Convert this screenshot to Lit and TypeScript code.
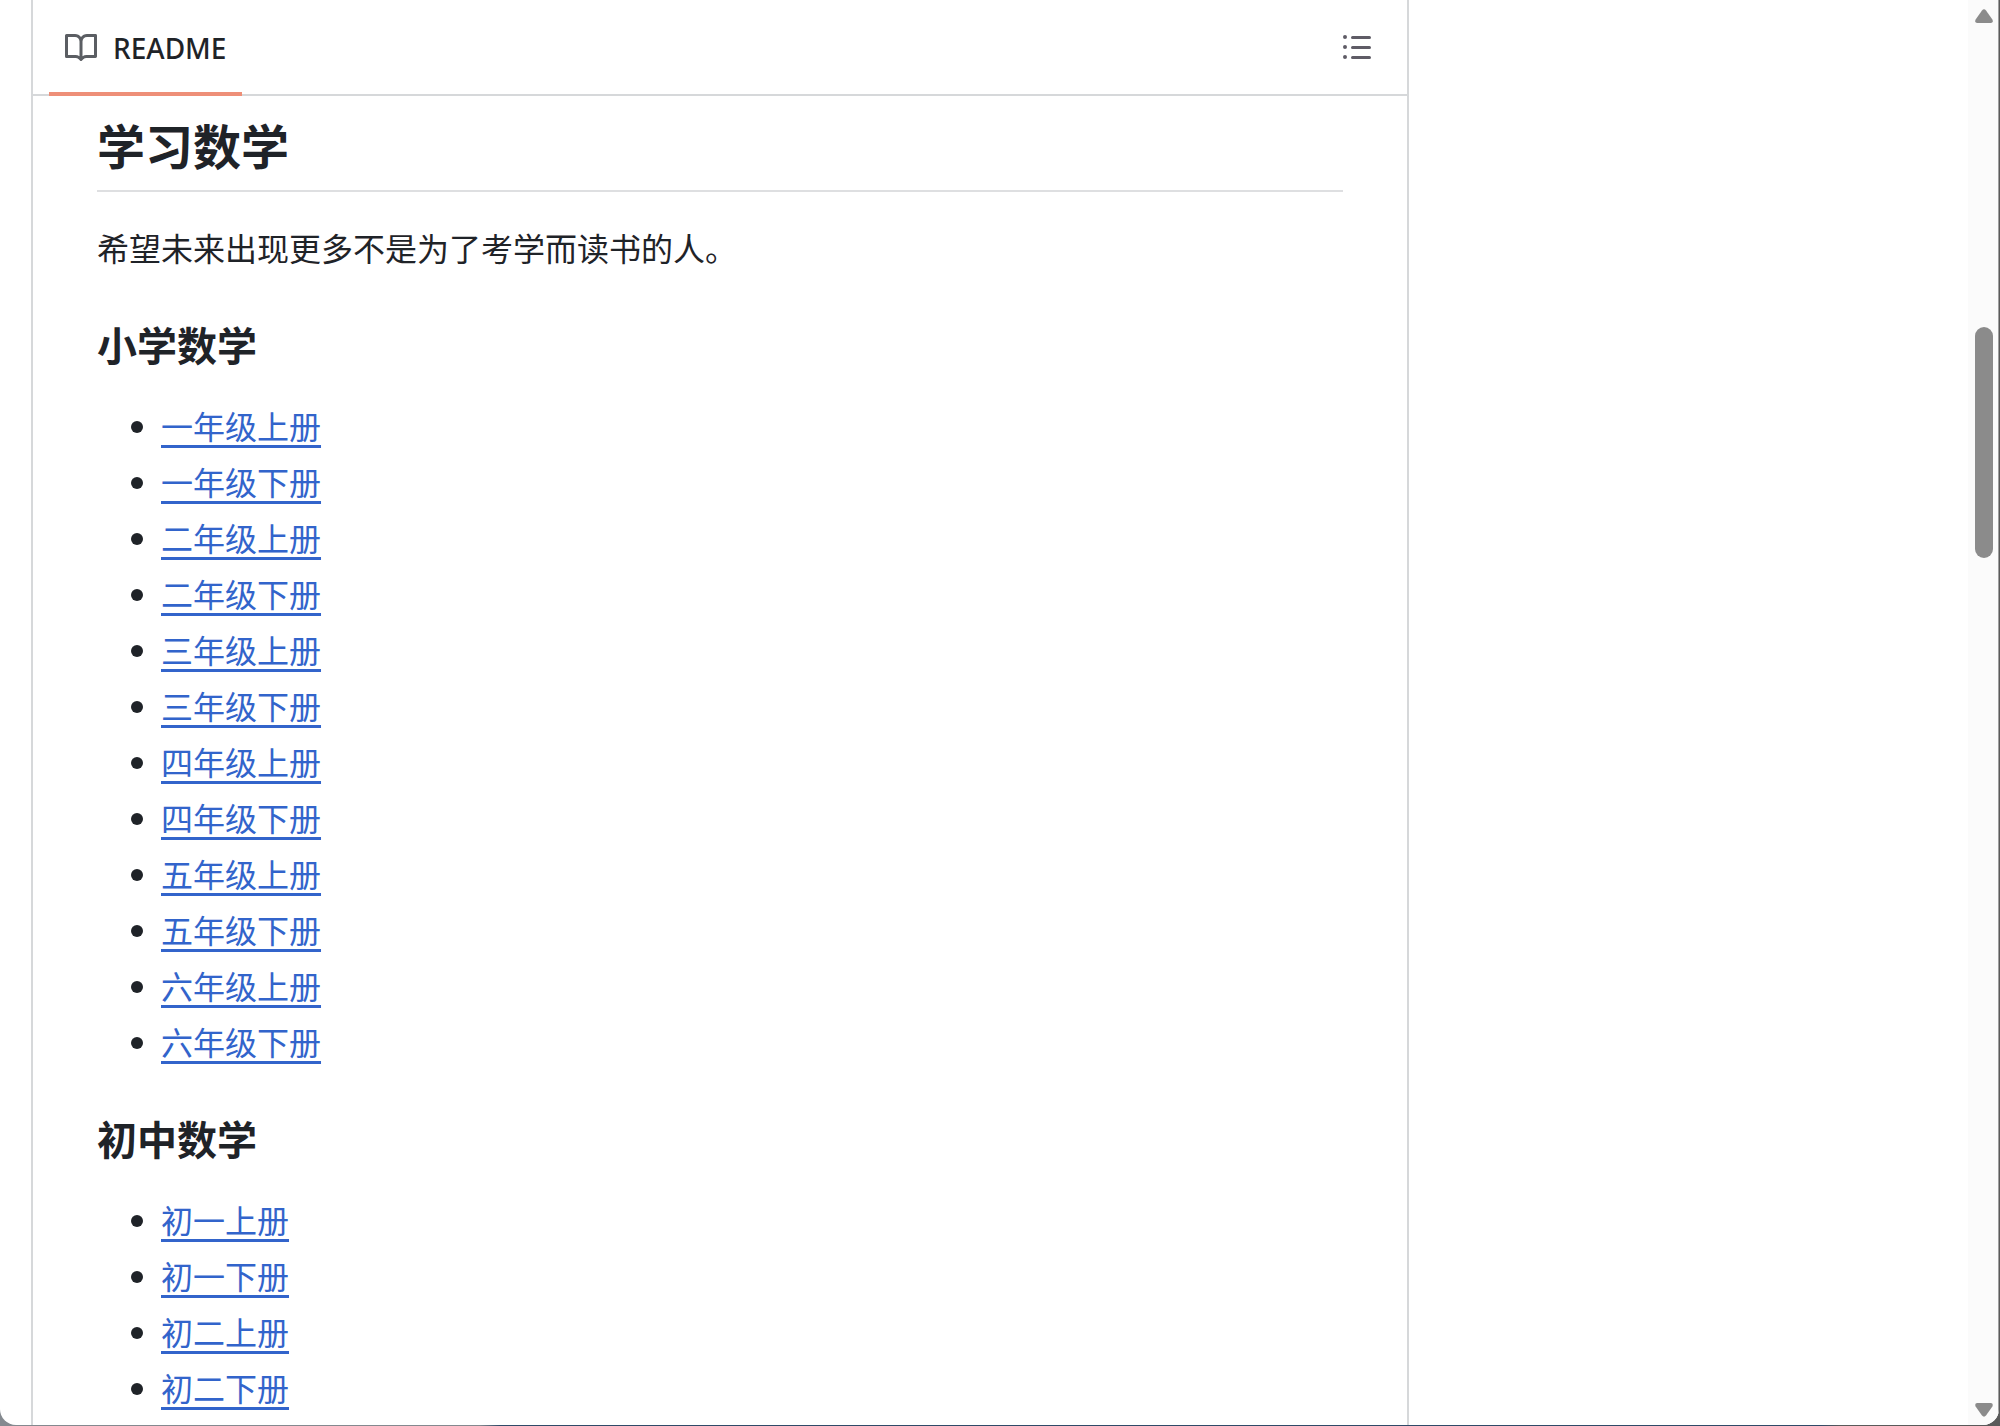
import { LitElement, html, css } from "lit";
import { customElement } from "lit/decorators.js";

interface Section {
  title: string;
  books: string[];
}

const SECTIONS: Section[] = [
  {
    title: "小学数学",
    books: ["一", "二", "三", "四", "五", "六"].flatMap((n) => [`${n}年级上册`, `${n}年级下册`]),
  },
  {
    title: "初中数学",
    books: ["初一上册", "初一下册", "初二上册", "初二下册"],
  },
];

@customElement("readme-header")
class ReadmeHeader extends LitElement {
  static styles = css`
    :host {
      display: flex;
      justify-content: space-between;
      align-items: stretch;
      height: 94px;
      padding: 0 34px 0 16px;
      border-bottom: 2px solid #d6d8da;
    }
    .tab {
      display: flex;
      align-items: center;
      gap: 16px;
      padding: 0 16px;
      margin-bottom: -2px;
      box-shadow: inset 0 -4px #ee8f78;
      color: #1f2328;
      font-size: 28px;
      font-weight: 500;
      line-height: 40px;
      text-decoration: none;
    }
    .outline {
      display: flex;
      align-items: center;
      padding: 0;
      border: 0;
      background: none;
      cursor: pointer;
    }
    .icon {
      display: block;
      width: 32px;
      height: 32px;
      fill: #5b5e63;
    }
    .outline .icon {
      fill: #5f5c66;
    }
  `;

  render() {
    return html`
      <a class="tab" href="#readme" aria-current="page">
        <svg class="icon" viewBox="0 0 16 16" aria-hidden="true">
          <path
            d="M0 1.75A.75.75 0 0 1 .75 1h4.253c1.227 0 2.317.59 3 1.501A3.743 3.743 0 0 1 11.006 1h4.245a.75.75 0 0 1 .75.75v10.5a.75.75 0 0 1-.75.75h-4.507a2.25 2.25 0 0 0-1.591.659l-.622.621a.75.75 0 0 1-1.06 0l-.622-.621A2.25 2.25 0 0 0 5.258 13H.75a.75.75 0 0 1-.75-.75Zm7.251 10.324.004-5.073-.002-2.253A2.25 2.25 0 0 0 5.003 2.5H1.5v9h3.757a3.75 3.75 0 0 1 1.994.574ZM8.755 4.75l-.004 7.322a3.752 3.752 0 0 1 1.992-.572H14.5v-9h-3.495a2.25 2.25 0 0 0-2.25 2.25Z"
          />
        </svg>
        <span>README</span>
      </a>
      <button class="outline" aria-label="Outline">
        <svg class="icon" viewBox="0 0 16 16" aria-hidden="true">
          <path
            d="M5.75 2.5h8.5a.75.75 0 0 1 0 1.5h-8.5a.75.75 0 0 1 0-1.5Zm0 5h8.5a.75.75 0 0 1 0 1.5h-8.5a.75.75 0 0 1 0-1.5Zm0 5h8.5a.75.75 0 0 1 0 1.5h-8.5a.75.75 0 0 1 0-1.5ZM2 14a1 1 0 1 1 0-2 1 1 0 0 1 0 2Zm1-6a1 1 0 1 1-2 0 1 1 0 0 1 2 0ZM2 4a1 1 0 1 1 0-2 1 1 0 0 1 0 2Z"
          />
        </svg>
      </button>
    `;
  }
}

@customElement("readme-article")
class ReadmeArticle extends LitElement {
  static styles = css`
    :host {
      display: block;
      padding: 21px 64px 0;
      color: #1f2328;
      font-size: 32px;
      line-height: 48px;
    }
    .title {
      margin: 0 0 33px;
      padding-bottom: 13px;
      border-bottom: 2px solid #dedfe1;
      font-size: 48px;
      line-height: 60px;
    }
    .intro {
      margin: 0;
    }
    .heading {
      margin: 48px 0 32px;
      font-size: 40px;
      line-height: 50px;
    }
    .books {
      display: grid;
      gap: 8px;
      margin: 0;
      padding: 0 0 0 34px;
      list-style: none;
    }
    .book {
      display: flex;
      align-items: center;
      gap: 18px;
    }
    .book::before {
      content: "";
      width: 12px;
      height: 12px;
      border-radius: 50%;
      background: #1f2328;
    }
    .link {
      color: #3264cb;
      text-decoration: underline;
      text-decoration-thickness: 3px;
      text-underline-offset: 6px;
      text-decoration-skip-ink: none;
    }
  `;

  render() {
    return html`
      <h1 class="title">学习数学</h1>
      <p class="intro">希望未来出现更多不是为了考学而读书的人。</p>
      ${SECTIONS.map(
        (s) => html`
          <h2 class="heading">${s.title}</h2>
          <ul class="books">
            ${s.books.map((b) => html`<li class="book"><a class="link" href="#${b}">${b}</a></li>`)}
          </ul>
        `,
      )}
    `;
  }
}

@customElement("scroll-rail")
class ScrollRail extends LitElement {
  static styles = css`
    :host {
      display: flex;
      flex-direction: column;
      align-items: center;
      padding: 9px 0 8px 2px;
      border-right: 1px solid #a0a0a0;
      background: #fbfbfb;
    }
    .arrow {
      display: block;
      width: 18px;
      height: 14px;
      fill: #8b8b8b;
    }
    .track {
      flex: 1;
      display: grid;
      grid-template-rows: 304fr 231fr 845fr;
    }
    .thumb {
      grid-row: 2;
      width: 18px;
      border-radius: 9px;
      background: #8b8b8b;
    }
  `;

  render() {
    return html`
      <svg class="arrow" viewBox="0 0 18 14" aria-hidden="true">
        <path d="M7 1.4Q9-.9 11 1.4L17.4 10.6Q18.6 13.6 15.8 14H2.2Q-.6 13.6.6 10.6Z" />
      </svg>
      <div class="track"><div class="thumb"></div></div>
      <svg class="arrow" viewBox="0 0 18 14" aria-hidden="true">
        <path d="M7 12.6Q9 14.9 11 12.6L17.4 3.4Q18.6.4 15.8 0H2.2Q-.6.4.6 3.4Z" />
      </svg>
    `;
  }
}

@customElement("app-root")
class AppRoot extends LitElement {
  static styles = css`
    :host {
      display: block;
      height: 100vh;
      box-sizing: border-box;
      padding: 0 1px 1px 0;
      background: linear-gradient(to right, #84898f 24%, #2f4a68 25%, #2f4a68 91%, #5a5a5a 92%);
      font-family: "Noto Sans", "Noto Sans CJK SC", sans-serif;
    }
    .window {
      display: grid;
      grid-template-columns: minmax(0, 1409fr) minmax(0, 559fr) 31px;
      height: 100%;
      overflow: hidden;
      border-radius: 0 0 16px 16px;
      background: #fff;
    }
    .readme {
      margin-left: 31px;
      border: 2px solid #d6d8da;
      border-width: 0 2px;
      overflow: hidden;
    }
    .rail {
      grid-column: 3;
    }
  `;

  render() {
    return html`
      <div class="window">
        <main class="readme">
          <readme-header></readme-header>
          <readme-article></readme-article>
        </main>
        <scroll-rail class="rail"></scroll-rail>
      </div>
    `;
  }
}
